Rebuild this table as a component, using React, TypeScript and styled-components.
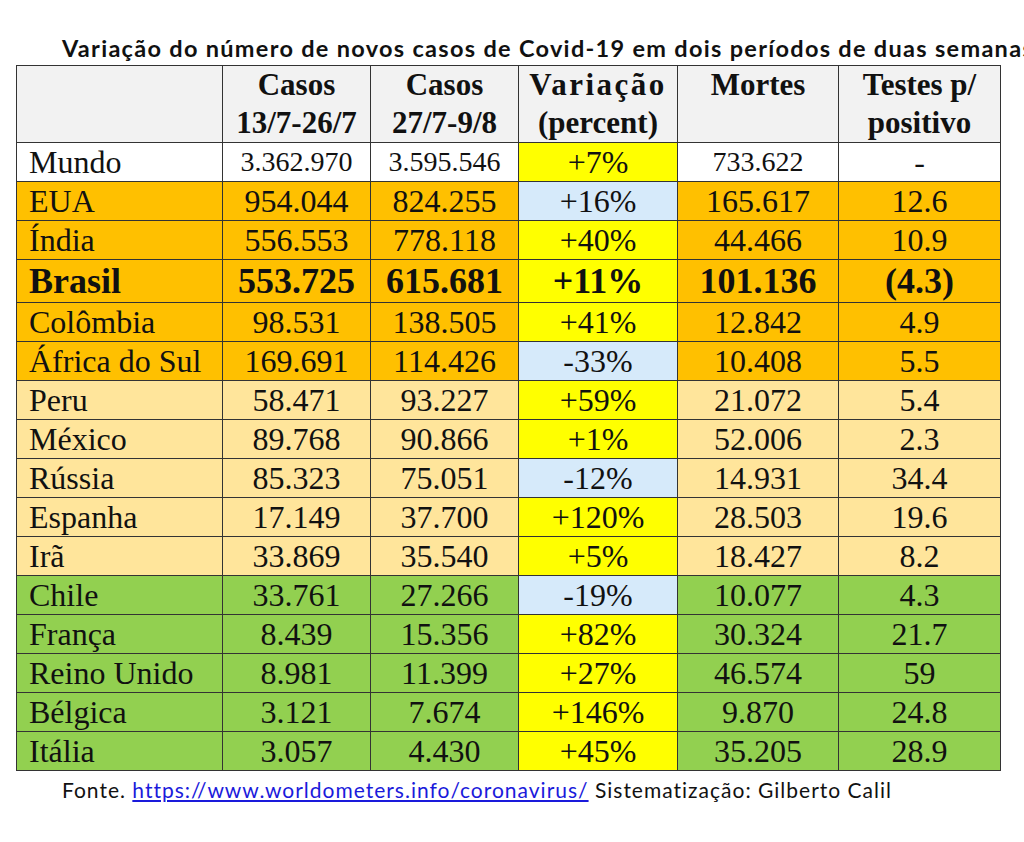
import styled, { createGlobalStyle } from 'styled-components';

type Tone = 'world' | 'hot' | 'warm' | 'cool';

type Row = {
    country: string;
    a: string;
    b: string;
    change: string;
    down?: boolean;
    deaths: string;
    tests: string;
    tone: Tone;
    strong?: boolean;
    small?: boolean;
};

const rows: Row[] = [
    { country: 'Mundo', a: '3.362.970', b: '3.595.546', change: '+7%', deaths: '733.622', tests: '-', tone: 'world', small: true },
    { country: 'EUA', a: '954.044', b: '824.255', change: '+16%', down: true, deaths: '165.617', tests: '12.6', tone: 'hot' },
    { country: 'Índia', a: '556.553', b: '778.118', change: '+40%', deaths: '44.466', tests: '10.9', tone: 'hot' },
    { country: 'Brasil', a: '553.725', b: '615.681', change: '+11%', deaths: '101.136', tests: '(4.3)', tone: 'hot', strong: true },
    { country: 'Colômbia', a: '98.531', b: '138.505', change: '+41%', deaths: '12.842', tests: '4.9', tone: 'hot' },
    { country: 'África do Sul', a: '169.691', b: '114.426', change: '-33%', down: true, deaths: '10.408', tests: '5.5', tone: 'hot' },
    { country: 'Peru', a: '58.471', b: '93.227', change: '+59%', deaths: '21.072', tests: '5.4', tone: 'warm' },
    { country: 'México', a: '89.768', b: '90.866', change: '+1%', deaths: '52.006', tests: '2.3', tone: 'warm' },
    { country: 'Rússia', a: '85.323', b: '75.051', change: '-12%', down: true, deaths: '14.931', tests: '34.4', tone: 'warm' },
    { country: 'Espanha', a: '17.149', b: '37.700', change: '+120%', deaths: '28.503', tests: '19.6', tone: 'warm' },
    { country: 'Irã', a: '33.869', b: '35.540', change: '+5%', deaths: '18.427', tests: '8.2', tone: 'warm' },
    { country: 'Chile', a: '33.761', b: '27.266', change: '-19%', down: true, deaths: '10.077', tests: '4.3', tone: 'cool' },
    { country: 'França', a: '8.439', b: '15.356', change: '+82%', deaths: '30.324', tests: '21.7', tone: 'cool' },
    { country: 'Reino Unido', a: '8.981', b: '11.399', change: '+27%', deaths: '46.574', tests: '59', tone: 'cool' },
    { country: 'Bélgica', a: '3.121', b: '7.674', change: '+146%', deaths: '9.870', tests: '24.8', tone: 'cool' },
    { country: 'Itália', a: '3.057', b: '4.430', change: '+45%', deaths: '35.205', tests: '28.9', tone: 'cool' },
];

const toneColors: Record<Tone, string> = {
    world: '#ffffff',
    hot: '#ffc000',
    warm: '#ffe59b',
    cool: '#92d050',
};

const GlobalStyle = createGlobalStyle`
    html, body {
        margin: 0;
        padding: 0;
        background: #ffffff;
        overflow: hidden;
    }
`

const Page = styled.div`
    width: 1024px;
    height: 842px;
    padding-top: 31px;
    box-sizing: border-box;
    overflow: hidden;
`

const Title = styled.h1`
    margin: 0 0 0 62px;
    height: 34px;
    font-family: Lato, 'Open Sans', sans-serif;
    font-weight: 700;
    font-size: 23.5px;
    letter-spacing: 1.3px;
    line-height: 34px;
    color: #111;
    white-space: nowrap;
`

const Table = styled.table`
    margin-left: 16px;
    width: 985px;
    table-layout: fixed;
    border-collapse: collapse;
    font-family: 'Liberation Serif', 'Times New Roman', serif;
    color: #111;
`

const HeadCell = styled.th`
    height: 76px;
    padding: 0;
    background: #f2f2f2;
    border: 1.5px solid #333;
    font-size: 31px;
    font-weight: 700;
    line-height: 38px;
    text-align: center;
    vertical-align: top;
`

const Spaced = styled.span`
    letter-spacing: 2.5px;
`

const BodyRow = styled.tr<{ $tone: Tone; $strong?: boolean }>`
    height: ${p => (p.$strong ? 43 : 39)}px;
    background: ${p => toneColors[p.$tone]};
    font-weight: ${p => (p.$strong ? 700 : 400)};
    font-size: ${p => (p.$strong ? 36 : 32)}px;
`

const Cell = styled.td<{ $small?: boolean }>`
    padding: 0;
    border: 1.5px solid #333;
    text-align: center;
    vertical-align: middle;
    line-height: 1;
    white-space: nowrap;
    font-size: ${p => (p.$small ? '28px' : 'inherit')};
`

const NameCell = styled(Cell)`
    text-align: left;
    padding-left: 12px;
`

const ChangeCell = styled(Cell)<{ $down?: boolean }>`
    background: ${p => (p.$down ? '#d6eafa' : '#ffff00')};
`

const Footer = styled.p`
    margin: 4px 0 0 62px;
    font-family: Lato, 'Open Sans', sans-serif;
    font-size: 21px;
    letter-spacing: 1px;
    line-height: 30px;
    color: #111;
    white-space: nowrap;
`

const Link = styled.a`
    color: #1a1adb;
    text-decoration: underline;
`

export default function App() {
    return (
        <Page>
            <GlobalStyle />
            <Title>Variação do número de novos casos de Covid-19 em dois períodos de duas semanas</Title>
            <Table>
                <colgroup>
                    <col style={{ width: 206 }} />
                    <col style={{ width: 148 }} />
                    <col style={{ width: 148 }} />
                    <col style={{ width: 159 }} />
                    <col style={{ width: 161 }} />
                    <col style={{ width: 162 }} />
                </colgroup>
                <thead>
                    <tr>
                        <HeadCell />
                        <HeadCell>Casos<br />13/7-26/7</HeadCell>
                        <HeadCell>Casos<br />27/7-9/8</HeadCell>
                        <HeadCell><Spaced>Variação</Spaced><br />(percent)</HeadCell>
                        <HeadCell>Mortes</HeadCell>
                        <HeadCell>Testes p/<br />positivo</HeadCell>
                    </tr>
                </thead>
                <tbody>
                    {rows.map(r => (
                        <BodyRow key={r.country} $tone={r.tone} $strong={r.strong}>
                            <NameCell>{r.country}</NameCell>
                            <Cell $small={r.small}>{r.a}</Cell>
                            <Cell $small={r.small}>{r.b}</Cell>
                            <ChangeCell $down={r.down}>{r.change}</ChangeCell>
                            <Cell $small={r.small}>{r.deaths}</Cell>
                            <Cell>{r.tests}</Cell>
                        </BodyRow>
                    ))}
                </tbody>
            </Table>
            <Footer>
                Fonte. <Link href="#">https://www.worldometers.info/coronavirus/</Link> Sistematização: Gilberto Calil
            </Footer>
        </Page>
    );
}
